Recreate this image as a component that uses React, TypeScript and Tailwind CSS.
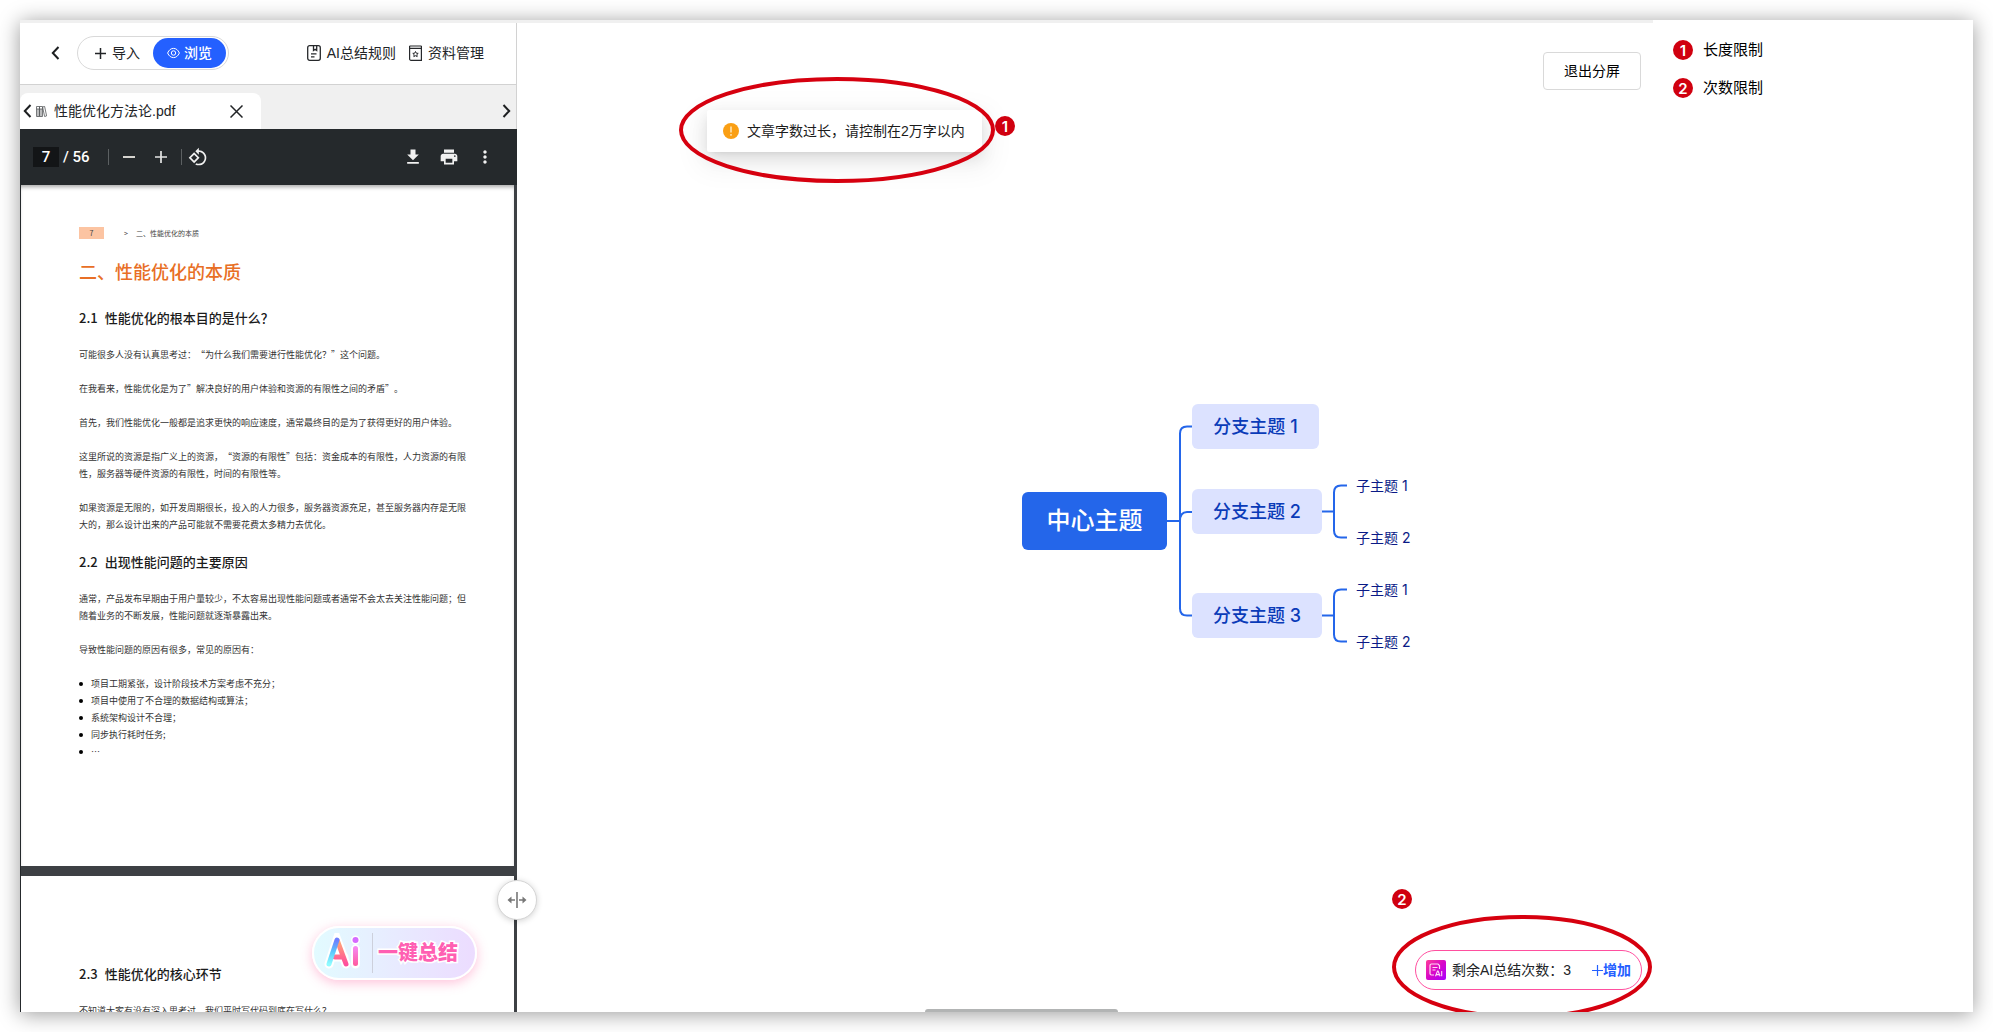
import React, { useState } from "react";

const Badge = ({ children }) => (
  <span className="flex size-5 shrink-0 items-center justify-center rounded-full bg-[#d0000f] font-[Inter,sans-serif] text-[15px] leading-none font-semibold text-white">
    {children}
  </span>
);

const Chevron = ({ flip = false }) => (
  <svg width="9" height="14" viewBox="0 0 9 14" className={flip ? "rotate-180" : ""}>
    <path d="M7.5 1 L1.8 7 L7.5 13" fill="none" stroke="#1d1f21" strokeWidth="2" />
  </svg>
);

const RulesIcon = () => (
  <svg width="14" height="16" viewBox="0 0 14 16" fill="none" stroke="#26282b" strokeWidth="1.3">
    <rect x="0.7" y="0.7" width="12.6" height="14.6" rx="2" />
    <path d="M6.5 1v4.500l1.600-1.200L9.700 5.500V1M4 8.800h5.500M4 11.800h3.500" />
  </svg>
);

const LibraryIcon = () => (
  <svg width="13" height="16" viewBox="0 0 13 16" fill="none" stroke="#26282b" strokeWidth="1.2">
    <path d="M0.5 1h12M0.5 3.4h12" />
    <path d="M0.6 1v12.900a1.4 1.4 0 0 0 1.4 1.4h10.400V1" />
    <path d="M6.5 6.5l.8 1.700 1.900.2-1.400 1.300.4 1.900-1.700-.9-1.700.9.4-1.900-1.400-1.300 1.900-.2z" strokeWidth="1" />
  </svg>
);

const EyeIcon = () => (
  <svg width="13" height="12" viewBox="0 0 13 12" fill="none" stroke="white" strokeWidth="1">
    <path d="M0.6 6C2 2.9 4 1.4 6.5 1.4S11 2.9 12.4 6C11 9.1 9 10.6 6.5 10.6S2 9.1 0.6 6z" />
    <circle cx="6.5" cy="6" r="2.2" />
  </svg>
);

const BooksIcon = () => (
  <svg width="11" height="11" viewBox="0 0 11 11" fill="none" stroke="#55585b" strokeWidth="0.8">
    <path d="M0.5 0.5h3v10h-3zM3.5 0.5h3v10h-3zM6.6 1l2-.6 2 9.5-2 .6zM0.5 3h6M2 3v7.5M5 3v7.5" />
  </svg>
);

const RotateIcon = () => (
  <svg width="20" height="20" viewBox="0 0 24 24" fill="#f1f1f1">
    <path d="M7.34 6.41L.86 12.9l6.49 6.48 6.49-6.48-6.5-6.49zM3.69 12.9l3.66-3.66L11 12.9l-3.66 3.66-3.65-3.66zm15.67-6.26C17.61 4.88 15.3 4 13 4V.76L8.76 5 13 9.24V6c1.79 0 3.58.68 4.95 2.05 2.73 2.73 2.73 7.17 0 9.9C16.58 19.32 14.79 20 13 20c-.97 0-1.94-.21-2.84-.61l-1.49 1.49C10.02 21.62 11.51 22 13 22c2.3 0 4.61-.88 6.36-2.64 3.52-3.51 3.52-9.21 0-12.72z" />
  </svg>
);

const DownloadIcon = () => (
  <svg width="20" height="20" viewBox="0 0 24 24" fill="#f1f1f1">
    <path d="M19 9h-4V3H9v6H5l7 7 7-7zM5 18v2h14v-2H5z" />
  </svg>
);

const PrintIcon = () => (
  <svg width="20" height="20" viewBox="0 0 24 24" fill="#f1f1f1">
    <path d="M19 8H5c-1.66 0-3 1.34-3 3v6h4v4h12v-4h4v-6c0-1.66-1.34-3-3-3zm-3 11H8v-5h8v5zm3-7c-.55 0-1-.45-1-1s.45-1 1-1 1 .45 1 1-.45 1-1 1zm-1-9H6v4h12V3z" />
  </svg>
);

const MoreIcon = () => (
  <svg width="20" height="20" viewBox="0 0 24 24" fill="#f1f1f1">
    <path d="M12 8c1.1 0 2-.9 2-2s-.9-2-2-2-2 .9-2 2 .9 2 2 2zm0 2c-1.1 0-2 .9-2 2s.9 2 2 2 2-.9 2-2-.9-2-2-2zm0 6c-1.1 0-2 .9-2 2s.9 2 2 2 2-.9 2-2-.9-2-2-2z" />
  </svg>
);

const AiLogo = () => (
  <svg width="42" height="40" viewBox="0 0 42 40" fill="none" strokeLinecap="round">
    <defs>
      <linearGradient id="aiLeft" x1="0" y1="1" x2="0" y2="0">
        <stop offset="0" stopColor="#8ffcff" />
        <stop offset="0.5" stopColor="#5cc8fb" />
        <stop offset="1" stopColor="#6d7dff" />
      </linearGradient>
      <linearGradient id="aiRight" x1="0" y1="0" x2="0" y2="1">
        <stop offset="0" stopColor="#ffa774" />
        <stop offset="1" stopColor="#ff4f9d" />
      </linearGradient>
      <linearGradient id="aiStem" x1="0" y1="0" x2="0" y2="1">
        <stop offset="0" stopColor="#f58cf8" />
        <stop offset="1" stopColor="#ff5a9d" />
      </linearGradient>
    </defs>
    <g stroke="white" strokeWidth="9">
      <path d="M7 31L15 7L24 31M14 24h8M33.5 16v15M33.5 7v0.1" />
    </g>
    <path d="M15.500 8L24 31M13 24h8" stroke="url(#aiRight)" strokeWidth="5" />
    <path d="M7 31L15 7" stroke="url(#aiLeft)" strokeWidth="5" />
    <rect x="31" y="13" width="5" height="20" rx="2.5" fill="url(#aiStem)" />
    <circle cx="33.5" cy="7" r="3" fill="#d56bff" />
  </svg>
);

const AiDocIcon = () => (
  <svg width="20" height="20" viewBox="0 0 20 20" fill="none">
    <defs>
      <linearGradient id="docBg" x1="0" y1="0" x2="1" y2="1">
        <stop offset="0" stopColor="#ff3d9a" />
        <stop offset="0.5" stopColor="#d807c8" />
        <stop offset="1" stopColor="#a800ff" />
      </linearGradient>
    </defs>
    <rect width="20" height="20" rx="2" fill="url(#docBg)" />
    <path
      d="M8 15H5.5A1.5 1.5 0 0 1 4 13.5V5.5A1.5 1.5 0 0 1 5.5 4H12l1.5 1.5V9M6.5 7.5h5M6.5 10h3"
      stroke="#ffd9f6"
      strokeWidth="1.2"
    />
    <path d="M9.5 16.3l2-5.300h.6l2 5.300M10.400 14.600h2.900M15.700 11v5.300" stroke="#ffd9f6" strokeWidth="1.1" />
  </svg>
);

const bullets = [
  "项目工期紧张，设计阶段技术方案考虑不充分；",
  "项目中使用了不合理的数据结构或算法；",
  "系统架构设计不合理；",
  "同步执行耗时任务;",
  "…",
];

const Heading = ({ no, children }) => (
  <h2 className="flex gap-[7px] text-[13px] leading-5 font-medium text-[#1b1b1b]">
    <span>{no}</span>
    <span>{children}</span>
  </h2>
);

const PdfPages = () => (
  <div className="flex min-h-0 flex-1 flex-col gap-[10px] overflow-hidden border-l border-[#25292c] bg-[#3d4044] pr-[3px] font-['Noto_Sans_CJK_SC',sans-serif] [text-spacing-trim:space-all]">
    <article className="h-[681px] shrink-0 bg-white pt-[42px] pl-[58px] text-[9px] leading-[17px] whitespace-nowrap text-[#333] shadow-[inset_0_4px_4px_-2px_rgba(0,0,0,0.35)]">
      <div className="flex h-3 items-center text-[7px] text-[#444]">
        <span className="flex h-3 w-[25px] items-center justify-center bg-[#fcc4a2]">7</span>
        <span className="ml-5">&gt;</span>
        <span className="ml-2">二、性能优化的本质</span>
      </div>
      <h1 className="mt-[19px] text-[18px] leading-[26px] font-medium text-[#e86f26]">二、性能优化的本质</h1>
      <div className="mt-6">
        <Heading no="2.1">性能优化的根本目的是什么？</Heading>
      </div>
      <div className="mt-[18px] flex flex-col gap-[17px]">
        <p>可能很多人没有认真思考过：“为什么我们需要进行性能优化？”这个问题。</p>
        <p>在我看来，性能优化是为了”解决良好的用户体验和资源的有限性之间的矛盾”。</p>
        <p>首先，我们性能优化一般都是追求更快的响应速度，通常最终目的是为了获得更好的用户体验。</p>
        <p>
          这里所说的资源是指广义上的资源，“资源的有限性”包括：资金成本的有限性，人力资源的有限
          <br />
          性，服务器等硬件资源的有限性，时间的有限性等。
        </p>
        <p>
          如果资源是无限的，如开发周期很长，投入的人力很多，服务器资源充足，甚至服务器内存是无限
          <br />
          大的，那么设计出来的产品可能就不需要花费太多精力去优化。
        </p>
      </div>
      <div className="mt-[19px]">
        <Heading no="2.2">出现性能问题的主要原因</Heading>
      </div>
      <div className="mt-[18px] flex flex-col gap-[17px]">
        <p>
          通常，产品发布早期由于用户量较少，不太容易出现性能问题或者通常不会太去关注性能问题；但
          <br />
          随着业务的不断发展，性能问题就逐渐暴露出来。
        </p>
        <p>导致性能问题的原因有很多，常见的原因有：</p>
        <ul>
          {bullets.map((b) => (
            <li key={b} className="flex items-center gap-2">
              <span className="size-1 rounded-full bg-black" />
              {b}
            </li>
          ))}
        </ul>
      </div>
    </article>
    <article className="flex-1 bg-white pt-[88px] pl-[58px] text-[9px] leading-[17px] whitespace-nowrap text-[#333]">
      <Heading no="2.3">性能优化的核心环节</Heading>
      <p className="mt-[18px]">不知道大家有没有深入思考过，我们平时写代码到底在写什么？</p>
    </article>
  </div>
);

const PdfToolbar = () => {
  const [page, setPage] = useState("7");

  return (
    <div className="flex h-14 shrink-0 items-center bg-[#25292c] pr-[22px] pl-[13px] font-[Roboto,sans-serif] text-[15px] font-medium text-white">
      <input
        aria-label="页码"
        value={page}
        onChange={(e) => setPage(e.target.value)}
        className="h-5 w-[26px] bg-[#131517] text-center"
      />
      <span className="ml-1 w-[45px]">/ 56</span>
      <span className="h-4 w-px bg-[#5c6062]" />
      <button aria-label="缩小" className="ml-[14px] flex h-3 w-3 items-center">
        <span className="h-[2px] w-full bg-[#d5d3cf]" />
      </button>
      <button aria-label="放大" className="ml-5">
        <svg width="12" height="12" viewBox="0 0 12 12">
          <path d="M6 0v12M0 6h12" stroke="#e4e4e4" strokeWidth="1.7" />
        </svg>
      </button>
      <span className="ml-[14px] h-4 w-px bg-[#5c6062]" />
      <button aria-label="旋转" className="ml-[6px]">
        <RotateIcon />
      </button>
      <div className="ml-auto flex items-center gap-4">
        <button aria-label="下载">
          <DownloadIcon />
        </button>
        <button aria-label="打印">
          <PrintIcon />
        </button>
        <button aria-label="更多">
          <MoreIcon />
        </button>
      </div>
    </div>
  );
};

const Reader = () => (
  <section className="relative flex w-[497px] shrink-0 flex-col">
    <header className="flex h-[62px] shrink-0 items-center border-r border-b border-[#d2d2d2] pr-8 pb-px pl-[31px] text-[14px] text-[#222427]">
      <button aria-label="返回">
        <Chevron />
      </button>
      <div className="ml-[17px] flex h-[34px] w-[152px] items-center justify-between rounded-full border border-[#d9d9d9] pr-[2px] pl-[17px]">
        <button className="flex items-center gap-[6px]">
          <svg width="11" height="11" viewBox="0 0 11 11">
            <path d="M5.5 0v11M0 5.5h11" stroke="#222427" strokeWidth="1.5" />
          </svg>
          导入
        </button>
        <button className="flex h-[30px] w-[73px] items-center justify-center gap-1 rounded-full bg-[#2460ff] font-medium text-white">
          <EyeIcon />
          浏览
        </button>
      </div>
      <div className="ml-auto flex items-center gap-[13px]">
        <button className="flex items-center gap-[6px]">
          <RulesIcon />
          AI总结规则
        </button>
        <button className="flex items-center gap-[6px]">
          <LibraryIcon />
          资料管理
        </button>
      </div>
    </header>
    <nav className="flex h-11 shrink-0 items-end border-r border-[#d2d2d2] bg-[#f0f0f0] text-[14px] text-[#222427]">
      <div className="flex h-9 w-[241px] items-center rounded-t-lg bg-white pr-[18px] pl-[3px]">
        <button aria-label="上一个标签">
          <Chevron />
        </button>
        <a href="#" className="ml-1 flex items-center gap-[7px]">
          <BooksIcon />
          性能优化方法论.pdf
        </a>
        <button aria-label="关闭" className="ml-auto">
          <svg width="13" height="13" viewBox="0 0 13 13">
            <path d="M0.5 0.5l12 12M12.5 0.5l-12 12" stroke="#222427" strokeWidth="1.5" />
          </svg>
        </button>
      </div>
      <button aria-label="下一个标签" className="mr-[5px] ml-auto flex h-9 items-center">
        <Chevron flip />
      </button>
    </nav>
    <PdfToolbar />
    <PdfPages />
    <button className="absolute right-10 bottom-8 flex h-[54px] w-[165px] items-center rounded-full border-2 border-white bg-linear-to-r from-[#e2fbff] via-[#e8ebff] to-[#ecdcff] pl-2 shadow-[0_3px_12px_rgba(255,80,150,0.35)]">
      <AiLogo />
      <span className="mr-[5px] ml-2 h-10 w-px bg-[#cdd0dc]" />
      <span className="text-[20px] font-black text-[#ff5fb2] [paint-order:stroke_fill] [-webkit-text-stroke:3px_white]">
        一键总结
      </span>
    </button>
    <button
      aria-label="调整分屏"
      className="absolute -right-5 bottom-[92px] z-10 flex size-10 items-center justify-center rounded-full border border-[#d5d5d5] bg-white shadow-[0_1px_6px_rgba(0,0,0,0.18)]"
    >
      <svg width="20" height="16" viewBox="0 0 20 16">
        <path d="M10 0v16M3 8h5M12 8h5" stroke="#777" strokeWidth="1.6" />
        <path d="M0.5 8L4.5 4.5v7zM19.5 8L15.5 4.5v7z" fill="#777" />
      </svg>
    </button>
  </section>
);

const branches = [
  { name: "分支主题 1", place: "top-0 w-[127px]", children: [] },
  { name: "分支主题 2", place: "top-[85px] w-[130px]", children: ["top-[72px]", "top-[124px]"] },
  { name: "分支主题 3", place: "top-[189px] w-[130px]", children: ["top-[176px]", "top-[228px]"] },
];

const MindMap = () => (
  <div className="absolute top-[381px] left-[505px] h-[250px] w-[400px] font-[Inter,'Noto_Sans_CJK_SC',sans-serif]">
    <svg width="400" height="250" viewBox="0 0 400 250" fill="none" stroke="#2466ea" strokeWidth="2" className="absolute">
      <path d="M145 117h13M170 22.5h-5q-7 0-7 7v175q0 7 7 7h5M158 117q0-9 7-9h5" />
      <path d="M300 107.500h12M325 81.500h-6q-7 0-7 7v38q0 7 7 7h6" />
      <path d="M300 211.500h12M325 185.500h-6q-7 0-7 7v38q0 7 7 7h6" />
    </svg>
    <div className="absolute top-[88px] flex h-[58px] w-[145px] items-center justify-center rounded-md bg-[#2466ea] text-[24px] font-medium text-white">
      中心主题
    </div>
    {branches.map((branch) => (
      <React.Fragment key={branch.name}>
        <div
          className={`absolute left-[170px] flex h-[45px] items-center justify-center rounded-md bg-[#dce2ff] text-[18px] font-medium text-[#0a3bb8] ${branch.place}`}
        >
          {branch.name}
        </div>
        {branch.children.map((place, i) => (
          <div key={place} className={`absolute left-[334px] text-[14px] leading-5 text-[#0a1a86] ${place}`}>
            子主题 {i + 1}
          </div>
        ))}
      </React.Fragment>
    ))}
  </div>
);

const Board = () => (
  <main className="relative flex min-w-0 flex-1 flex-col justify-between text-[14px]">
    <div className="flex items-start justify-end pr-[210px]">
      <button className="mt-[29px] h-[38px] w-[98px] rounded-sm border border-[#d9d9d9] text-black">退出分屏</button>
      <ol className="mt-[17px] ml-8 flex flex-col gap-[18px] text-[15px] leading-5 text-black">
        <li className="flex items-center gap-[10px]">
          <Badge>1</Badge>长度限制
        </li>
        <li className="flex items-center gap-[10px]">
          <Badge>2</Badge>次数限制
        </li>
      </ol>
    </div>

    <div
      role="alert"
      className="absolute top-[87px] left-[190px] flex h-[42px] w-[275px] items-center gap-2 rounded-xs bg-white pl-4 text-[#1c1c1c] shadow-[0_3px_6px_-4px_rgba(0,0,0,0.12),0_6px_16px_rgba(0,0,0,0.1),0_9px_28px_8px_rgba(0,0,0,0.05)]"
    >
      <svg width="16" height="16" viewBox="0 0 16 16">
        <circle cx="8" cy="8" r="8" fill="#fa9f14" />
        <path d="M8 3.5v6M8 11v1.7" stroke="#ffe3b0" strokeWidth="1.6" />
      </svg>
      文章字数过长，请控制在2万字以内
      <svg className="absolute -top-[33px] -left-[28px]" width="316" height="106" viewBox="0 0 316 106">
        <ellipse cx="158" cy="53" rx="156" ry="51" fill="none" stroke="#d6000f" strokeWidth="4" />
      </svg>
      <div className="absolute top-[6px] -right-[33px]">
        <Badge>1</Badge>
      </div>
    </div>

    <MindMap />

    <div className="relative mr-[331px] mb-[22px] flex h-10 w-[227px] items-center self-end rounded-full border border-[#ff4f9f] pr-[10px] pl-[10px] text-[#222427]">
      <AiDocIcon />
      <span className="ml-[6px]">剩余AI总结次数：3</span>
      <a href="#" className="ml-auto flex items-center font-bold text-[#2460ff]">
        <svg width="11" height="11" viewBox="0 0 11 11">
          <path d="M5.5 0v11M0 5.5h11" stroke="#2460ff" strokeWidth="1.2" />
        </svg>
        增加
      </a>
      <svg className="absolute -top-9 -left-[24px]" width="260" height="104" viewBox="0 0 260 104">
        <ellipse cx="130" cy="52" rx="128" ry="50" fill="none" stroke="#d6000f" strokeWidth="4" />
      </svg>
      <div className="absolute -top-[62px] -left-6">
        <Badge>2</Badge>
      </div>
    </div>

    <div className="absolute bottom-0 left-[408px] h-[3px] w-[193px] rounded-t-[3px] bg-[#b2b4b4]" />
  </main>
);

export default function App() {
  return (
    <div
      lang="zh-CN"
      className="h-screen bg-white p-5 font-['Liberation_Sans','Noto_Sans_CJK_SC',sans-serif]"
    >
      <div className="flex h-full flex-col overflow-hidden bg-white shadow-[0_2px_20px_rgba(0,0,0,0.4)]">
        <div className="mr-80 h-[3px] shrink-0 bg-[#f0f0f0]" />
        <div className="flex min-h-0 flex-1">
          <Reader />
          <Board />
        </div>
      </div>
    </div>
  );
}
